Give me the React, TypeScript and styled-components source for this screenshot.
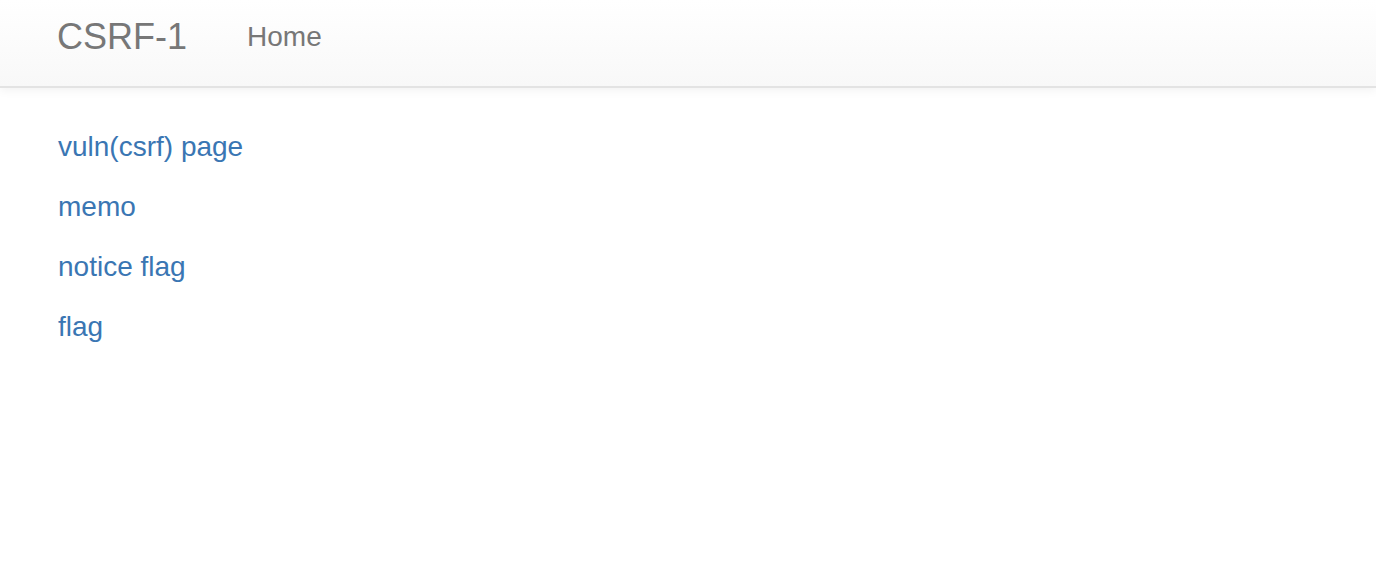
import React from "react";
import styled, { createGlobalStyle } from "styled-components";

const GlobalStyle = createGlobalStyle`
  html, body { margin: 0; padding: 0; background: #fff; }
  body {
    font-family: "Liberation Sans", Arial, Helvetica, sans-serif;
    font-size: 28px;
    line-height: 40px;
    color: #333;
  }
`;

const Navbar = styled.nav`
  height: 86px;
  background-image: linear-gradient(to bottom, #ffffff 0%, #f8f8f8 100%);
  border-bottom: 2px solid #e3e3e3;
  box-shadow: 0 2px 10px rgba(0, 0, 0, 0.06);
`;

const NavInner = styled.div`
  display: flex;
  align-items: flex-start;
  padding: 0 58px 0 57px;
  gap: 60px;
`;

const Brand = styled.a`
  font-size: 36px;
  line-height: 40px;
  padding-top: 17px;
  color: #777;
  text-decoration: none;
`;

const NavLink = styled.a`
  font-size: 28px;
  line-height: 40px;
  padding-top: 17px;
  color: #777;
  text-decoration: none;
`;

const Main = styled.main`
  padding: 39px 58px 0;
  display: flex;
  flex-direction: column;
  align-items: flex-start;
  gap: 20px;
`;

const Item = styled.a`
  color: #3a76b3;
  text-decoration: none;
  font-size: 28px;
  line-height: 40px;
`;

export default function App() {
  return (
    <>
      <GlobalStyle />
      <Navbar>
        <NavInner>
          <Brand href="#">CSRF-1</Brand>
          <NavLink href="#">Home</NavLink>
        </NavInner>
      </Navbar>
      <Main>
        <Item href="#">vuln(csrf) page</Item>
        <Item href="#">memo</Item>
        <Item href="#">notice flag</Item>
        <Item href="#">flag</Item>
      </Main>
    </>
  );
}
